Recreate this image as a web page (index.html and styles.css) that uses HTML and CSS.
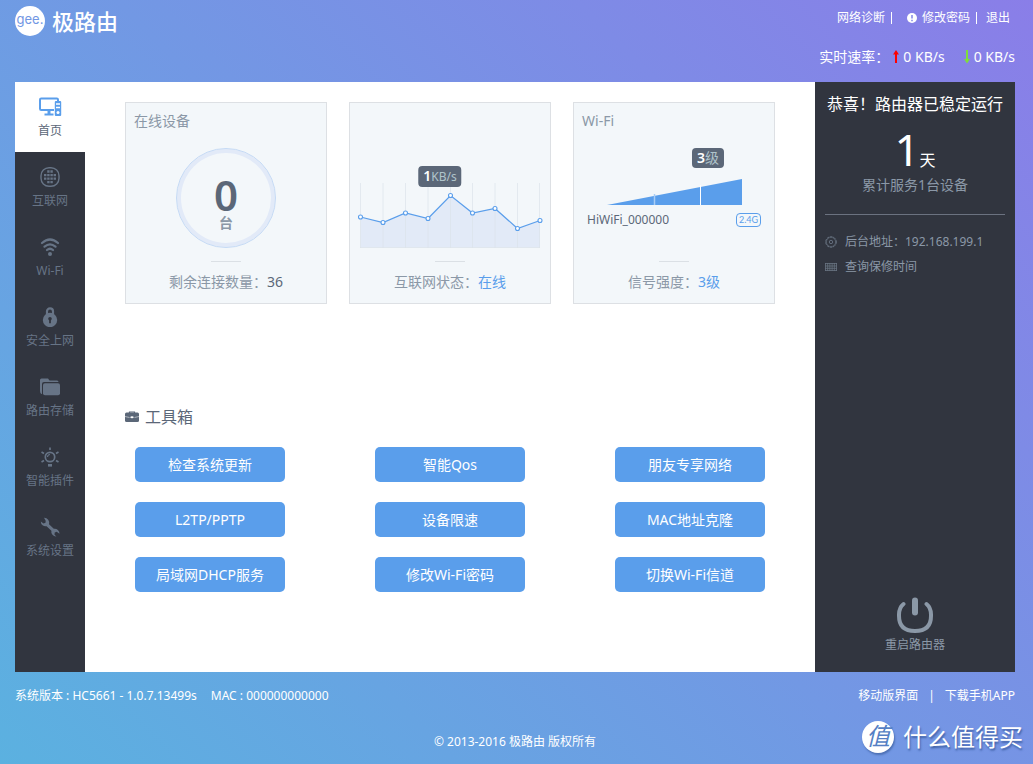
FILE: index.html
```html
<!DOCTYPE html>
<html lang="zh-CN">
<head>
<meta charset="utf-8">
<title>极路由</title>
<link rel="stylesheet" href="styles.css">
</head>
<body>
<header class="header">
  <a class="logo" href="#">
    <span class="logo-mark">gee.</span>
    <span class="logo-name">极路由</span>
  </a>
  <div class="header-side">
    <nav class="top-links">
      <a href="#">网络诊断</a>
      <a href="#" class="with-rule"><svg class="warn" viewBox="0 0 10 10"><circle cx="5" cy="5" r="5" fill="#fff"/><path d="M5 2v3.6M5 6.8v1.4" stroke="#8186e6" stroke-width="1.5"/></svg>修改密码</a>
      <a href="#" class="with-rule">退出</a>
    </nav>
    <div class="rates">
      <span>实时速率：</span>
      <span class="rate"><svg class="arrow" viewBox="0 0 6 14"><path d="M3 0l3 4.500H4V13H2V4.500H0z" fill="#f00"/></svg>0 KB/s</span>
      <span class="rate"><svg class="arrow" viewBox="0 0 6 14"><path d="M2 0h2v9h2l-3 4.500L0 9h2z" fill="#7fdc3c"/></svg>0 KB/s</span>
    </div>
  </div>
</header>

<div class="shell">
  <nav class="side-nav">
    <a href="#" class="nav-item active">
      <svg class="nav-icon" viewBox="0 0 24 20" fill="none" stroke="currentColor"><path d="M16 13H3.200Q2 13 2 11.800V2.700Q2 1.500 3.200 1.500H18.800Q20 1.500 20 2.700V4" stroke-width="2"/><path d="M11 13v4" stroke-width="3"/><path d="M6.500 17.500h9" stroke-width="2"/><rect x="16.800" y="4" width="6.400" height="15" rx="1" fill="currentColor" stroke="none"/><path d="M18 7h4M18 10.500h4" stroke="#fff" stroke-width="1.300"/><circle cx="20" cy="15.500" r="1.500" fill="#fff" stroke="none"/></svg>
      <span>首页</span>
    </a>
    <a href="#" class="nav-item">
      <svg class="nav-icon" viewBox="0 0 24 20" fill="none" stroke="currentColor"><rect x="3" y=".7" width="18" height="18.600" rx="8" stroke-width="1.400"/><path d="M9.200 4.500h6M6 8.200h12M6 11.600h12M9.200 15.200h6" stroke-width="2.300" stroke-dasharray="2.400 .8"/></svg>
      <span>互联网</span>
    </a>
    <a href="#" class="nav-item">
      <svg class="nav-icon" viewBox="0 0 24 20" fill="none" stroke="currentColor" stroke-width="2.200" stroke-linecap="round"><path d="M4 6Q12 -1 20 6M6.500 9.700Q12 5 17.500 9.700M9 13Q12 10.500 15 13"/><circle cx="12" cy="17" r="2" fill="currentColor" stroke="none"/></svg>
      <span>Wi-Fi</span>
    </a>
    <a href="#" class="nav-item">
      <svg class="nav-icon" viewBox="0 0 24 20"><path d="M9 9V4.300a3 3 0 0 1 6 0V9" fill="none" stroke="currentColor" stroke-width="2.200"/><circle cx="12" cy="13" r="7.200" fill="currentColor"/><circle cx="12" cy="11.800" r="1.800" fill="#31353f"/><path d="M12 12v4.200" stroke="#31353f" stroke-width="1.800"/></svg>
      <span>安全上网</span>
    </a>
    <a href="#" class="nav-item">
      <svg class="nav-icon" viewBox="0 0 24 20"><path d="M3.500 17Q2 16.500 2 14V3Q2 1.500 3.500 1.500H10l1.500 2H19q1.500 0 1.500 1.500H6Q4 5 4 7v10z" fill="currentColor"/><rect x="5" y="6.200" width="17" height="12" rx="2" fill="currentColor"/></svg>
      <span>路由存储</span>
    </a>
    <a href="#" class="nav-item">
      <svg class="nav-icon" viewBox="0 0 24 20" fill="none" stroke="currentColor" stroke-width="1.700"><circle cx="12" cy="10" r="4.700"/><path d="M9.500 10q0-2.200 2.500-2.500" stroke-width="1.200"/><path d="M12 .5v2.500M3.500 5l2.500 1.500M20.500 5L18 6.500M3.500 15L6 13.500M20.500 15L18 13.500"/><path d="M10 18.300h4" stroke-width="2.600"/></svg>
      <span>智能插件</span>
    </a>
    <a href="#" class="nav-item">
      <svg class="nav-icon" viewBox="0 0 24 20"><path d="M6 .8a5 5 0 0 1 5 6.500l4.800 4.500a4.800 4.800 0 0 1 5.700 5l-2.800-2-2 .8-.2 2.200 1.900 1.700a4.800 4.800 0 0 1-5-5.800L8.600 9.200A4.800 4.800 0 0 1 2.800 4.500l2.700 1.900 2-.7.200-2z" fill="currentColor"/></svg>
      <span>系统设置</span>
    </a>
  </nav>

  <main class="content">
    <section class="cards">
      <article class="card">
        <h2 class="card-title">在线设备</h2>
        <div class="visual">
          <div class="ring"><strong>0</strong><span>台</span></div>
        </div>
        <p class="card-foot">剩余连接数量：<span class="dark">36</span></p>
      </article>
      <article class="card">
        <h2 class="card-title"></h2>
        <div class="visual">
          <svg class="chart" viewBox="0 0 200 110">
            <path d="M10.500 78L33 83.500 55.500 74 78 79.500 100.500 56.500 122.500 74 145 69.500 167.500 89.500 190 81.500V108.500H10.500z" fill="#e2eaf7"/>
            <path d="M10.500 44v65M33 44v65M55.500 44v65M78 44v65M100.500 44v65M122.500 44v65M145 44v65M167.500 44v65M189.500 44v65M10 108.500h180" stroke="#dce3ea" stroke-opacity=".7" fill="none"/>
            <path d="M10.500 78L33 83.500 55.500 74 78 79.500 100.500 56.500 122.500 74 145 69.500 167.500 89.500 190 81.500" fill="none" stroke="#5a9eeb" stroke-width="1.200"/>
            <g fill="#fff" stroke="#5a9eeb" stroke-width="1.100"><circle cx="10.500" cy="78" r="2"/><circle cx="33" cy="83.500" r="2"/><circle cx="55.500" cy="74" r="2"/><circle cx="78" cy="79.500" r="2"/><circle cx="100.500" cy="56.500" r="2"/><circle cx="122.500" cy="74" r="2"/><circle cx="145" cy="69.500" r="2"/><circle cx="167.500" cy="89.500" r="2"/><circle cx="190" cy="81.500" r="2"/></g>
          </svg>
          <span class="badge badge-speed"><b>1</b><small>KB/s</small></span>
        </div>
        <p class="card-foot">互联网状态：<a href="#">在线</a></p>
      </article>
      <article class="card">
        <h2 class="card-title">Wi-Fi</h2>
        <div class="visual">
          <svg class="signal" viewBox="0 0 200 66"><path d="M33 66L168 40V66z" fill="#5a9eeb"/><path d="M80.500 55v11" stroke="#a9cdf5" stroke-width="1.500"/><path d="M126.500 46v20" stroke="#fff"/></svg>
          <span class="badge badge-level"><b>3</b>级</span>
          <div class="ssid"><span>HiWiFi_000000</span><span class="band">2.4G</span></div>
        </div>
        <p class="card-foot">信号强度：<a href="#">3级</a></p>
      </article>
    </section>

    <section class="toolbox">
      <h2 class="tool-title"><svg class="case" viewBox="0 0 14 12"><path d="M4.500 2V1h5v1" fill="none" stroke="currentColor" stroke-width="1.200"/><rect y="1.500" width="14" height="9.500" rx="1.500" fill="currentColor"/><path d="M0 5.500l4.500 1M14 5.500L9.500 6.500" stroke="#fff" stroke-width=".5"/><ellipse cx="7" cy="6.300" rx="1.700" ry="1" fill="#fff"/></svg>工具箱</h2>
      <div class="tools">
        <button type="button">检查系统更新</button>
        <button type="button">智能Qos</button>
        <button type="button">朋友专享网络</button>
        <button type="button">L2TP/PPTP</button>
        <button type="button">设备限速</button>
        <button type="button">MAC地址克隆</button>
        <button type="button">局域网DHCP服务</button>
        <button type="button">修改Wi-Fi密码</button>
        <button type="button">切换Wi-Fi信道</button>
      </div>
    </section>
  </main>

  <aside class="status">
    <h2 class="status-title">恭喜！路由器已稳定运行</h2>
    <p class="days"><span class="days-num">1</span>天</p>
    <p class="served">累计服务1台设备</p>
    <ul class="facts">
      <li><svg class="fact-icon" viewBox="0 0 12 12" fill="none" stroke="currentColor"><circle cx="6" cy="6" r="5.300" stroke-dasharray="2.600 .73"/><circle cx="6" cy="6" r="4.600" stroke-width=".6"/><circle cx="6" cy="6" r="1.700" stroke-width=".9"/></svg>后台地址：192.168.199.1</li>
      <li><svg class="fact-icon" viewBox="0 0 12 12" fill="none" stroke="currentColor"><path d="M.5 2v8M2.700 2v8M4.900 2v8M7.100 2v8M9.300 2v8M11.500 2v8M0 2.500h12M0 5h12M0 7.300h12M0 9.500h12" stroke-width=".8"/></svg><a href="#">查询保修时间</a></li>
    </ul>
    <button type="button" class="reboot">
      <svg class="power" viewBox="0 0 36 36" fill="none" stroke="currentColor" stroke-linecap="round"><path d="M6.500 7C1.500 11 2 16 2 19Q2 34 18 34T34 19C34 16 34.500 11 29.500 7" stroke-width="4"/><path d="M18 3.500v12" stroke-width="6"/></svg>
      <span>重启路由器</span>
    </button>
  </aside>
</div>

<footer class="footer">
  <div class="foot-row">
    <div class="version"><span>系统版本 : HC5661 - 1.0.7.13499s</span><span>MAC : 000000000000</span></div>
    <div class="foot-links"><a href="#">移动版界面</a><span>|</span><a href="#">下载手机APP</a></div>
  </div>
  <p class="copyright">© 2013-2016 极路由 版权所有</p>
</footer>
<div class="watermark"><span class="seal">值</span><span>什么值得买</span></div>
</body>
</html>
```

FILE: styles.css
```css
* { box-sizing: border-box; }
body {
  position: relative;
  margin: 0;
  min-height: 100vh;
  padding: 0 18px 0 15px;
  background: linear-gradient(45deg, #5bb1e0, #8a7ee8);
  font: 12px/20px "Noto Sans", "Noto Sans CJK SC", sans-serif;
  color: #fff;
}
a { color: inherit; text-decoration: none; }
h2, p, ul { margin: 0; padding: 0; font-weight: 400; }
ul { list-style: none; }
button { border: 0; font: inherit; cursor: pointer; }

.header { display: flex; justify-content: space-between; height: 82px; }
.logo { display: flex; gap: 7px; height: 42px; align-items: center; }
.logo-mark {
  width: 30px; height: 30px; border-radius: 50%;
  background: #fff; color: #7297e4;
  font: 13px/26px Inter, sans-serif; text-align: center;
}
.logo-name { font-size: 22px; line-height: 32px; font-weight: 500; }
.header-side { display: flex; flex-direction: column; align-items: flex-end; padding-top: 8px; gap: 19px; }
.top-links { display: flex; align-items: center; gap: 6px; padding-right: 5px; }
.with-rule { display: flex; align-items: center; }
.with-rule::before { content: ""; width: 1px; height: 12px; margin-right: 9px; background: #fff; }
.with-rule:nth-child(2)::before { margin-right: 10px; }
.warn { width: 10px; height: 10px; margin: 0 5px; }
.rates { display: flex; font-size: 14px; }
.rate { display: flex; align-items: center; gap: 4px; }
.rate + .rate { margin-left: 19px; }
.arrow { width: 6px; height: 14px; }
.rates > span:first-child { margin-right: 4px; }

.shell { display: flex; min-height: 590px; background: #fff; }
.side-nav { flex: 0 0 70px; background: #31353f; color: #677486; }
.nav-item { display: flex; flex-direction: column; align-items: center; height: 70px; padding-top: 15px; gap: 4px; }
.nav-item.active { background: #fff; color: #5a9eeb; }
.nav-item.active span { color: #5b6778; }
.nav-icon { width: 24px; height: 20px; }

.content { flex: 1; min-width: 0; padding: 20px 40px; }
.cards { display: grid; grid-template-columns: repeat(3, 1fr); gap: 22px; }
.card { border: 1px solid #dde0e4; background: #f3f7fa; color: #8b98a7; font-size: 14px; }
.card-title { height: 36px; padding: 8px; font-size: 14px; }
.visual { position: relative; height: 123px; }
.visual::after { content: ""; position: absolute; bottom: 0; left: calc(50% - 15px); width: 30px; height: 1px; background: #dbe0e5; }
.visual:has(.ring) { padding-top: 9px; }
.ring {
  display: flex; flex-direction: column; align-items: center;
  width: 100px; height: 100px; margin: 0 auto; padding-top: 16px;
  border-radius: 50%; border: 1px solid #c5daf5; box-shadow: inset 0 0 0 4px #e2eaf8;
  font-weight: 700;
}
.ring strong { font-size: 42px; line-height: 60px; font-weight: 600; color: #5b6778; }
.ring span { margin-top: -12px; line-height: 20px; font-size: 14px; }
.chart, .signal { display: block; width: 100%; }
.badge {
  position: absolute; transform: translateX(-50%);
  padding: 0 5px; border-radius: 4px; background: #5b6778;
  color: #b0c4cb; line-height: 20px; white-space: nowrap;
}
.badge b { color: #fff; font-weight: 600; }
.badge small { font-size: 12px; }
.badge-speed { top: 27px; left: 45%; }
.badge-level { top: 9px; left: 67%; }
.ssid { display: flex; justify-content: space-between; align-items: center; padding: 5px 13px; font-size: 12px; color: #5b6778; }
.band { width: 25px; border: 1px solid #5a9eeb; border-radius: 4px; color: #5a9eeb; font: 9px/12px Lato, sans-serif; text-align: center; }
.card-foot { padding: 10px 0 11px; text-align: center; }
.card-foot a { color: #5a9eeb; }
.dark { color: #5b6778; }

.toolbox { margin-top: 101px; }
.tool-title { display: flex; align-items: center; gap: 6px; font-size: 16px; line-height: 24px; color: #5b6778; }
.case { width: 14px; height: 12px; }
.tools { display: grid; grid-template-columns: repeat(3, 150px); justify-content: space-between; row-gap: 20px; padding: 18px 10px; }
.tools button { height: 35px; padding: 0; border-radius: 5px; background: #5a9eeb; color: #fff; font-size: 14px; }

.status { display: flex; flex: 0 0 200px; flex-direction: column; padding: 10px; background: #31353f; color: #8b98a7; text-align: center; }
.status-title { color: #fff; font-size: 16px; line-height: 24px; white-space: nowrap; }
.days { height: 48px; margin-top: 11px; color: #fff; font-size: 16px; line-height: 44px; }
.days-num { font-size: 44px; }
.served { padding-bottom: 19px; border-bottom: 1px solid #6b7280; font-size: 14px; }
.facts { display: grid; gap: 5px; padding-top: 17px; text-align: left; }
.facts li { display: flex; align-items: center; gap: 8px; }
.fact-icon { width: 12px; height: 12px; color: #687382; }
.reboot { display: flex; flex-direction: column; align-items: center; gap: 2px; margin: auto auto 0; padding: 0 0 7px; background: none; color: #8b98a7; }
.power { width: 36px; height: 36px; }

.footer { padding-top: 14px; }
.foot-row, .version, .foot-links { display: flex; }
.foot-row { justify-content: space-between; }
.version { gap: 14px; }
.foot-links { gap: 10px; }
.copyright { margin-top: 26px; text-align: center; }
.watermark { position: absolute; right: 10px; bottom: 10px; display: flex; align-items: center; gap: 9px; font-size: 24px; line-height: 34px; text-shadow: 1px 2px 2px #3f61a5; }
.seal { width: 32px; height: 32px; border-radius: 50%; background: #fff; color: #557fc4; font-size: 24px; line-height: 30px; font-style: italic; text-align: center; text-shadow: none; box-shadow: 1px 2px 2px #4d70b5; }
```
